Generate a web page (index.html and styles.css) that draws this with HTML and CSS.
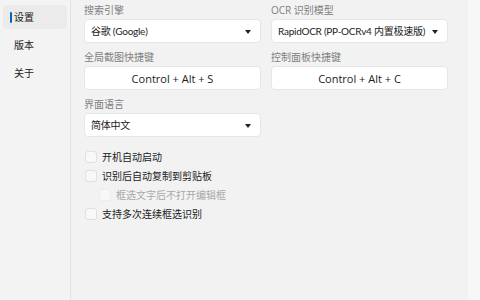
FILE: index.html
```html
<!DOCTYPE html>
<html>
	<head>
		<title>设置</title>
		<meta charset="utf-8">
		<link rel="stylesheet" href="styles.css">
	</head>
	<body>
		<div id="window">
			<div class="sidebar">
				<div class="navItem active"><span class="bar"></span>设置</div>
				<div class="navItem">版本</div>
				<div class="navItem">关于</div>
			</div>

			<div class="main">
				<div class="row">
					<div class="field">
						<div class="label">搜索引擎</div>
						<div class="combo">谷歌 (Google)<span class="arrow"></span></div>
					</div>
					<div class="field">
						<div class="label">OCR 识别模型</div>
						<div class="combo">RapidOCR (PP-OCRv4 内置极速版)<span class="arrow"></span></div>
					</div>
				</div>

				<div class="row">
					<div class="field">
						<div class="label">全局截图快捷键</div>
						<div class="button">Control + Alt + S</div>
					</div>
					<div class="field">
						<div class="label">控制面板快捷键</div>
						<div class="button">Control + Alt + C</div>
					</div>
				</div>

				<div class="row lang">
					<div class="field">
						<div class="label">界面语言</div>
						<div class="combo">简体中文<span class="arrow"></span></div>
					</div>
				</div>

				<div class="checks">
					<div class="check"><span class="box"></span>开机自动启动</div>
					<div class="check"><span class="box"></span>识别后自动复制到剪贴板</div>
					<div class="check sub disabled"><span class="box"></span>框选文字后不打开编辑框</div>
					<div class="check"><span class="box"></span>支持多次连续框选识别</div>
				</div>
			</div>

			<div class="scrollStrip"></div>
		</div>
	</body>
</html>
```

FILE: styles.css
```css
html, body {
	margin: 0;
	height: 100%;
}

body {
	background-color: #f2f2f2;
	font-family: "Open Sans", "Noto Sans CJK SC", sans-serif;
	font-size: 10px;
	color: #1b1b1b;
}

#window {
	display: flex;
	height: 300px;
	width: 480px;
}

.sidebar {
	width: 71px;
	background-color: #f3f3f3;
	border-right: 1px solid #e2e2e2;
	padding: 5px 3px 0 3px;
	box-sizing: border-box;
	flex-shrink: 0;
}

.navItem {
	height: 24px;
	line-height: 24px;
	padding-left: 11px;
	margin-bottom: 4px;
	border-radius: 4px;
	font-size: 10px;
	position: relative;
}

.navItem.active {
	background-color: #ebebeb;
}

.bar {
	position: absolute;
	left: 7px;
	top: 7px;
	width: 2px;
	height: 11px;
	border-radius: 1px;
	background-color: #0067c0;
}

.main {
	flex: 1;
	padding: 3px 0 0 13px;
}

.row {
	display: flex;
	gap: 10px;
	margin-bottom: 7px;
}

.row.lang {
	margin-top: 1px;
}

.field {
	width: 177px;
}

.label {
	font-size: 10px;
	color: #808080;
	height: 15px;
	line-height: 15px;
	margin-bottom: 1px;
}

.combo, .button {
	height: 24px;
	line-height: 23px;
	background-color: #fff;
	border: 1px solid #e6e6e6;
	border-radius: 4px;
	box-sizing: border-box;
}

.combo {
	padding-left: 6px;
	position: relative;
	white-space: nowrap;
	font-family: "Lato", "Noto Sans CJK SC", sans-serif;
	font-size: 10px;
	letter-spacing: -0.25px;
}

.arrow {
	position: absolute;
	right: 9px;
	top: 10px;
	border-left: 3px solid transparent;
	border-right: 3px solid transparent;
	border-top: 4px solid #222;
}

.button {
	text-align: center;
	font-size: 11px;
}

.checks {
	padding-top: 3px;
}

.check {
	display: flex;
	align-items: center;
	height: 19px;
	font-size: 10px;
}

.box {
	width: 12px;
	height: 12px;
	border: 1px solid #e0e0e0;
	border-radius: 3px;
	background-color: #f8f8f8;
	margin: 0 5px 0 1px;
	box-sizing: border-box;
}

.check.sub {
	padding-left: 14px;
}

.check.disabled {
	color: #a8a8a8;
}

.check.disabled .box {
	border-color: #ececec;
}

.scrollStrip {
	width: 12px;
	background-color: #f7f7f7;
}
```
